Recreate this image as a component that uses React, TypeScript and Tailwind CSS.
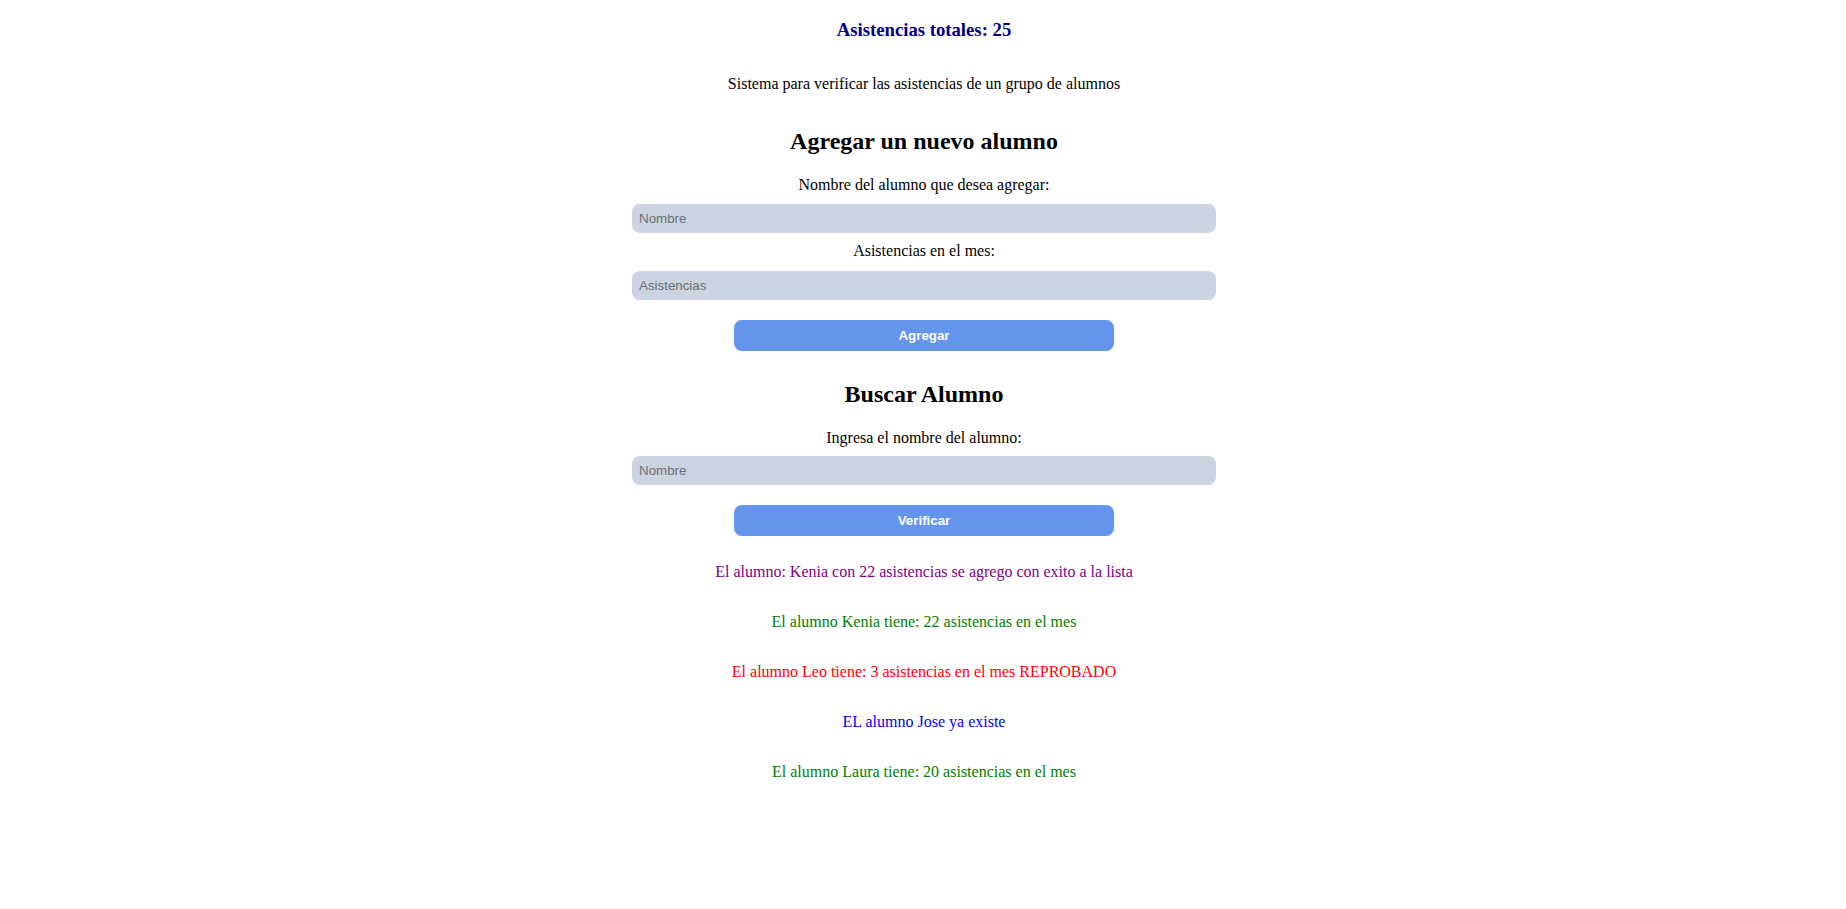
import { useState } from "react";

type Message = { text: string; color: string };

const messages: Message[] = [
  {
    text: "El alumno: Kenia con 22 asistencias se agrego con exito a la lista",
    color: "text-[#800080]",
  },
  { text: "El alumno Kenia tiene: 22 asistencias en el mes", color: "text-[#008000]" },
  {
    text: "El alumno Leo tiene: 3 asistencias en el mes REPROBADO",
    color: "text-[#ff0000]",
  },
  { text: "EL alumno Jose ya existe", color: "text-[#0000ff]" },
  { text: "El alumno Laura tiene: 20 asistencias en el mes", color: "text-[#008000]" },
];

function TextField({ placeholder, className }: { placeholder: string; className: string }) {
  return (
    <input
      type="text"
      placeholder={placeholder}
      className={`${className} h-[29px] w-[584px] rounded-lg bg-[#cbd5e1] px-[7px] font-['Liberation_Sans',Arial,sans-serif] text-[13.33px] text-black outline-none placeholder:text-[#6b6f75]`}
    />
  );
}

function ActionButton({ label, className }: { label: string; className: string }) {
  return (
    <button
      type="button"
      className={`${className} h-[31px] w-[380px] rounded-lg bg-[#6495ed] font-['Liberation_Sans',Arial,sans-serif] text-[13.33px] font-bold text-white`}
    >
      {label}
    </button>
  );
}

export default function App() {
  const [total] = useState(25);

  return (
    <main className="flex min-h-screen flex-col items-center bg-white pb-10 pl-[2px] font-['Liberation_Serif','Times_New_Roman',serif] text-[16px] text-black">
      <h3 className="mt-[19px] text-[18.72px] font-bold leading-[21px] text-[#00008b]">
        Asistencias totales: {total}
      </h3>

      <p className="mt-[35px] leading-[18px]">
        Sistema para verificar las asistencias de un grupo de alumnos
      </p>

      <h2 className="mt-[34px] text-[24px] font-bold leading-[28px]">
        Agregar un nuevo alumno
      </h2>
      <label className="mt-[21px] leading-[18px]">
        Nombre del alumno que desea agregar:
      </label>
      <TextField placeholder="Nombre" className="mt-[10px]" />
      <label className="mt-[9px] leading-[18px]">Asistencias en el mes:</label>
      <TextField placeholder="Asistencias" className="mt-[11px]" />
      <ActionButton label="Agregar" className="mt-[20px]" />

      <h2 className="mt-[29px] text-[24px] font-bold leading-[28px]">Buscar Alumno</h2>
      <label className="mt-[21px] leading-[18px]">Ingresa el nombre del alumno:</label>
      <TextField placeholder="Nombre" className="mt-[9px]" />
      <ActionButton label="Verificar" className="mt-[20px]" />

      <div className="mt-[27px] flex flex-col items-center gap-[32px]">
        {messages.map((msg, i) => (
          <p key={i} className={`leading-[18px] ${msg.color}`}>
            {msg.text}
          </p>
        ))}
      </div>
    </main>
  );
}
